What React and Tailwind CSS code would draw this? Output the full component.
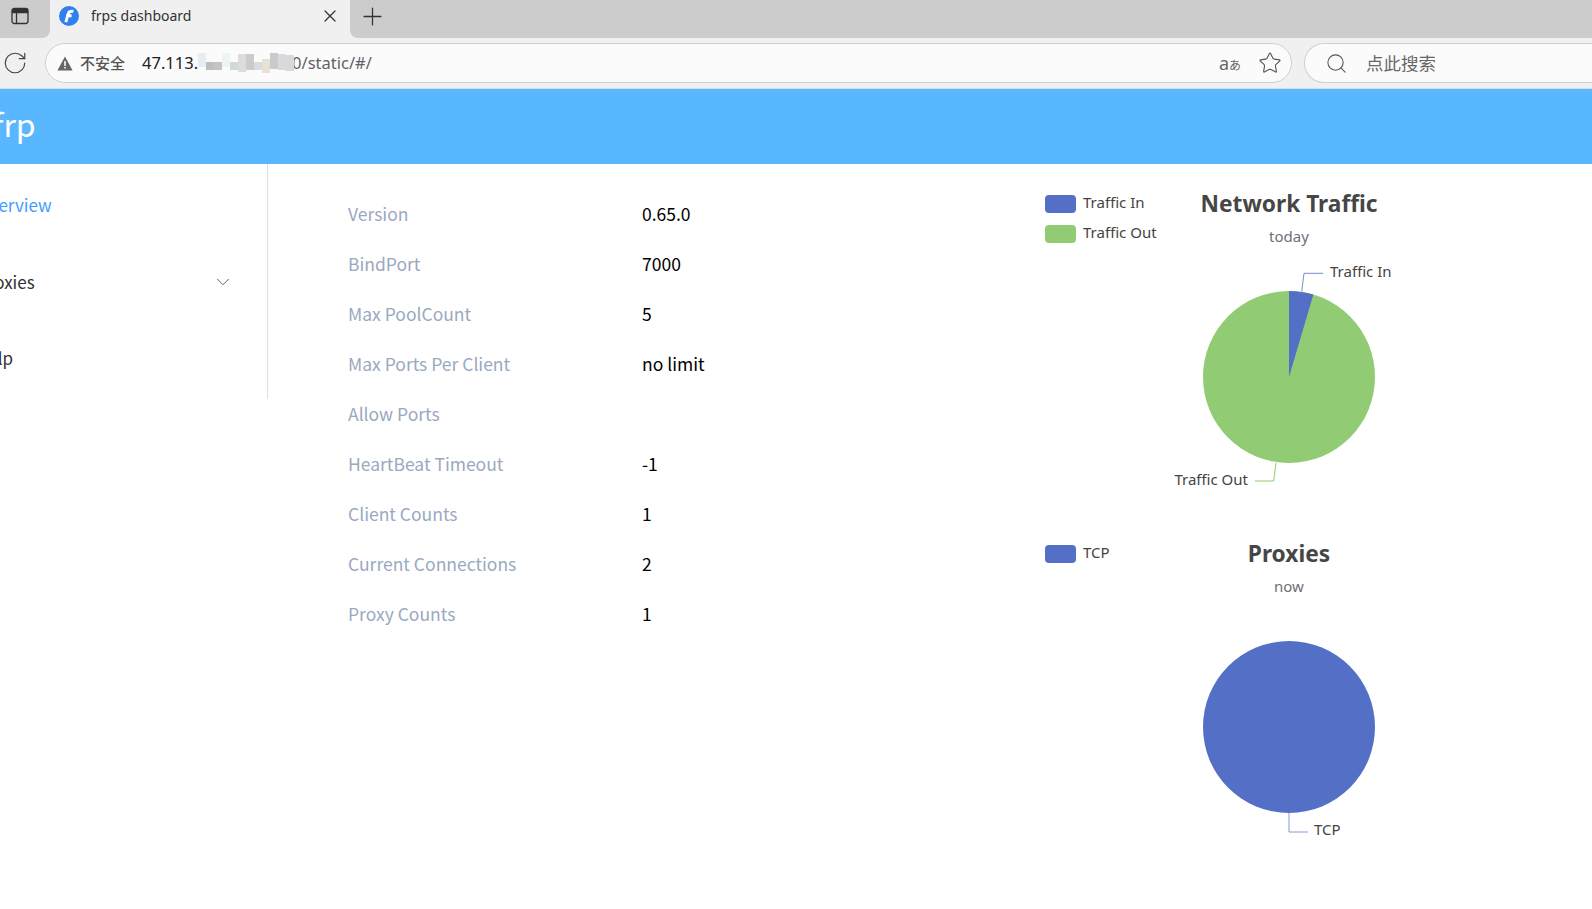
import { ChevronDown, Plus, RotateCw, Search, Star, X } from "lucide-react";

const rows = [
  ["Version", "0.65.0"],
  ["BindPort", "7000"],
  ["Max PoolCount", "5"],
  ["Max Ports Per Client", "no limit"],
  ["Allow Ports", ""],
  ["HeartBeat Timeout", "-1"],
  ["Client Counts", "1"],
  ["Current Connections", "2"],
  ["Proxy Counts", "1"],
];

const BLUE = "#5470c6";
const GREEN = "#91cc75";

// blurred-out part of the address, as a strip of pale squares
const blurCells = [
  "h-[14px] bg-[#e6eef4] -translate-y-[3px]",
  "h-[8px] bg-[#bdbdbd] translate-y-[3px]",
  "h-[8px] bg-[#c2c4c6] translate-y-[3px]",
  "h-[14px] bg-[#eef4f0] -translate-y-[3px]",
  "h-[8px] bg-[#d2d8dc] translate-y-[3px]",
  "h-[18px] bg-[#dcdcdc]",
  "h-[16px] bg-[#c8cccc] -translate-y-[1px]",
  "h-[8px] bg-[#d8dce0] translate-y-[3px]",
  "h-[14px] bg-[#e8e0d4] translate-y-[3px]",
  "h-[16px] bg-[#c8cacc] -translate-y-[2px]",
  "h-[16px] bg-[#d8dae0] -translate-y-[1px]",
  "h-[16px] bg-[#dcd8d6]",
];

function BrowserChrome() {
  return (
    <div className="font-['Noto_Sans','Noto_Sans_CJK_SC',sans-serif]">
      <div className="flex h-[38px] bg-[#f0f0f0]">
        <div className="flex w-[50px] items-center rounded-br-[8px] bg-[#cccccc] pb-[6px] pl-[11px]">
          <svg width="18" height="18" viewBox="0 0 18 18" fill="none" stroke="#333" strokeWidth="1.3">
            <rect x="1" y="1.5" width="16" height="15" rx="2.5" />
            <path d="M5.5 5.5v11" />
            <path d="M1.5 2.5h15v3h-15z" fill="#333" />
          </svg>
        </div>
        <div className="flex w-[300px] items-center pb-[6px] pl-[9px]">
          <svg width="20" height="20" viewBox="0 0 20 20">
            <circle cx="10" cy="10" r="10" fill="#2f80ed" />
            <path d="M6.8 16.2 9.4 7.4c.5-1.7 2-2.5 5-2M7 9.8h5.6" fill="none" stroke="#fff" strokeWidth="2.9" />
          </svg>
          <span className="ml-[12px] flex-1 pb-[2px] text-[14px] text-[#333]">frps dashboard</span>
          <X size={20} strokeWidth={1.5} className="mr-[10px] text-[#333]" />
        </div>
        <div className="flex flex-1 items-center rounded-bl-[8px] bg-[#cccccc] pb-[6px] pl-[8px]">
          <Plus size={29} strokeWidth={1.05} className="text-[#333]" />
        </div>
      </div>
      <div className="flex h-[51px] items-center overflow-hidden border-b border-[#dcdcdc] bg-[#f0f0f0]">
        <div className="flex w-[45px] shrink-0 items-center pl-[2px]">
          <RotateCw size={26} strokeWidth={1.1} className="text-[#444]" />
        </div>
        <div className="flex h-[40px] w-[1247px] shrink-0 items-center rounded-full border border-[#d0d0d0] bg-[#fbfbfb] pl-[11px] pr-[9px]">
          <svg width="16" height="15" viewBox="0 0 16 15">
            <path d="M8 .5 15.6 14.5H.4Z" fill="#666" />
            <path d="M7.2 5h1.6v5H7.2zM7.2 11h1.6v1.6H7.2z" fill="#fbfbfb" />
          </svg>
          <span className="ml-[7px] text-[15px] font-medium text-[#555]">不安全</span>
          <span className="ml-[17px] pt-[1px] text-[16.5px] text-[#222]">47.113.</span>
          <span className="relative z-10 -mr-[4px] flex w-[98px] items-center blur-[0.6px]">
            {blurCells.map((c) => (
              <span key={c} className={`w-[8px] shrink-0 ${c}`} />
            ))}
          </span>
          <span className="pt-[1px] text-[16.5px] text-[#5f6368]">0/static/#/</span>
          <span className="ml-auto flex items-baseline text-[#666]">
            <span className="text-[18px]">a</span>
            <span className="text-[12px]">あ</span>
          </span>
          <Star size={24} strokeWidth={1.1} className="ml-[17px] text-[#555]" />
        </div>
        <div className="ml-[12px] flex h-[40px] flex-1 items-center rounded-l-full border border-r-0 border-[#d0d0d0] bg-[#fbfbfb] pl-[20px]">
          <Search size={23} strokeWidth={1.1} className="text-[#555]" />
          <span className="ml-[18px] text-[17.5px] text-[#666]">点此搜索</span>
        </div>
      </div>
    </div>
  );
}

function Sidebar() {
  return (
    <div className="h-[235px] w-[268px] shrink-0 overflow-hidden border-r border-[#dcdfe6] text-[17px]">
      <div className="mt-[16px] flex h-[50px] items-center">
        <span className="-ml-[23px] text-[#409eff]">Overview</span>
      </div>
      <div className="mt-[27px] flex h-[50px] items-center justify-between pr-[33px]">
        <span className="-ml-[23px] text-[#303133]">Proxies</span>
        <ChevronDown size={22} strokeWidth={1} className="text-[#555]" />
      </div>
      <div className="mt-[26px] flex h-[50px] items-center">
        <span className="-ml-[24px] text-[#303133]">Help</span>
      </div>
    </div>
  );
}

function InfoTable() {
  return (
    <div className="flex w-[762px] shrink-0 flex-col pl-[80px] pt-[25px] text-[17.5px]">
      {rows.map(([label, value]) => (
        <div key={label} className="flex h-[50px] items-center">
          <span className="w-[294px] text-[#99a9bf]">{label}</span>
          <span className="text-black">{value}</span>
        </div>
      ))}
    </div>
  );
}

function Legend({ items }) {
  return items.map(([name, color], i) => (
    <g key={name}>
      <rect x="15" y={25 + i * 30} width="31" height="18" rx="4" fill={color} />
      <text x="53" y={38 + i * 30} fontSize="15" fill="#444">{name}</text>
    </g>
  ));
}

function Heading({ title, sub }) {
  return (
    <>
      <text x="259" y="42" textAnchor="middle" fontSize="22.7" fontWeight="700" fill="#464646">{title}</text>
      <text x="259" y="72" textAnchor="middle" fontSize="15" fill="#6e7079">{sub}</text>
    </>
  );
}

function TrafficChart() {
  return (
    <svg width="400" height="350" className="block font-['Noto_Sans',sans-serif]">
      <Legend items={[["Traffic In", BLUE], ["Traffic Out", GREEN]]} />
      <Heading title="Network Traffic" sub="today" />
      <circle cx="259" cy="207" r="86" fill={GREEN} />
      <path d="M259 207V121A86 86 0 0 1 283.4 124.5Z" fill={BLUE} />
      <path d="M271.7 121.7 274 103.3H293" fill="none" stroke={BLUE} strokeOpacity="0.8" />
      <text x="300" y="107" fontSize="15" fill="#444">Traffic In</text>
      <path d="M246 292.7 243.7 311H225" fill="none" stroke={GREEN} />
      <text x="218" y="315" textAnchor="end" fontSize="15" fill="#444">Traffic Out</text>
    </svg>
  );
}

function ProxyChart() {
  return (
    <svg width="400" height="350" className="block font-['Noto_Sans',sans-serif]">
      <Legend items={[["TCP", BLUE]]} />
      <Heading title="Proxies" sub="now" />
      <circle cx="259" cy="207" r="86" fill={BLUE} />
      <path d="M259 293V312H278" fill="none" stroke={BLUE} strokeOpacity="0.7" />
      <text x="284" y="315" fontSize="15" fill="#444">TCP</text>
    </svg>
  );
}

export default function App() {
  return (
    <div className="h-[909px] w-[1592px] overflow-hidden bg-white">
      <BrowserChrome />
      <div className="flex h-[75px] items-center bg-[#58b7ff] pb-[8px] font-['Noto_Sans_CJK_SC',sans-serif]">
        <span className="-ml-[7px] text-[32px] text-white">frp</span>
      </div>
      <div className="flex font-['Noto_Sans_CJK_SC',sans-serif]">
        <Sidebar />
        <InfoTable />
        <div className="pt-[6px]">
          <TrafficChart />
          <ProxyChart />
        </div>
      </div>
    </div>
  );
}
